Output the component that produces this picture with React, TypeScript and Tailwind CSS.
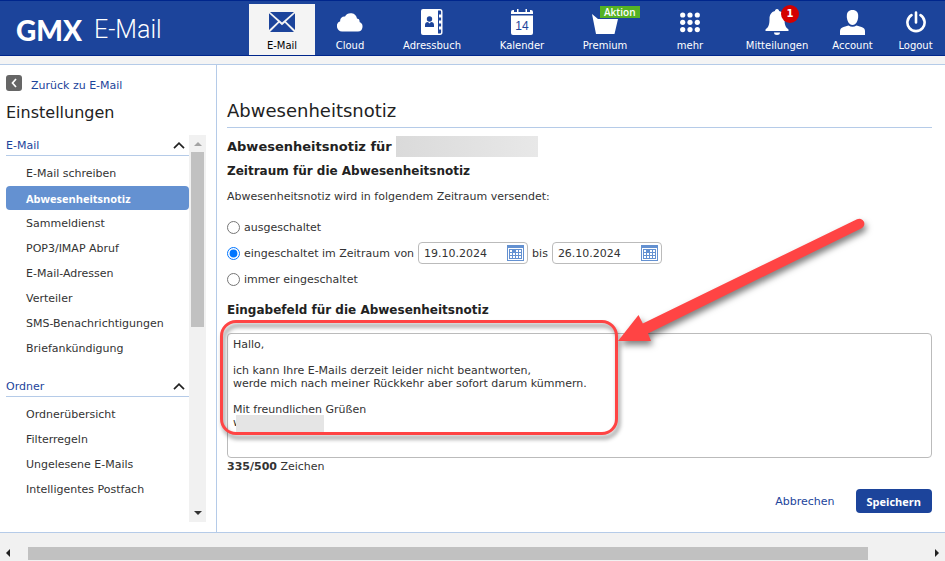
import React from 'react';

const mailLinks = [
    'E-Mail schreiben',
    'Abwesenheitsnotiz',
    'Sammeldienst',
    'POP3/IMAP Abruf',
    'E-Mail-Adressen',
    'Verteiler',
    'SMS-Benachrichtigungen',
    'Briefankündigung',
];

const folderLinks = ['Ordnerübersicht', 'Filterregeln', 'Ungelesene E-Mails', 'Intelligentes Postfach'];

const message = `Hallo,

ich kann Ihre E-Mails derzeit leider nicht beantworten,
werde mich nach meiner Rückkehr aber sofort darum kümmern.

Mit freundlichen Grüßen
w`;

const MailIcon = () => (
    <svg width="26" height="20" viewBox="0 0 26 20" fill="#1c449b">
        <path d="M1 0h24L13 10.500z" />
        <path d="M0 1.200 9 9.500 0 18zM26 1.200 17 9.500 26 18z" />
        <path d="M1 20 10.200 10.800 13 13.200l2.800-2.400L25 20z" />
    </svg>
);

const CloudIcon = () => (
    <svg width="26" height="19" viewBox="0 0 26 19" fill="white">
        <path d="M5.500 18.500A5.300 5.300 0 0 1 3.200 8.300 4.200 4.200 0 0 1 8 3.500 6.500 6.500 0 0 1 20 5.500a3 3 0 0 1 2.500 3.600A4.900 4.900 0 0 1 21 18.500z" />
    </svg>
);

const AddressIcon = () => (
    <svg width="22" height="26" viewBox="0 0 22 26" fill="white">
        <path d="M2 0h15v26H2a2 2 0 0 1-2-2V2a2 2 0 0 1 2-2z" />
        <path d="M17 .7h2q1.800 0 1.800 2v3.500H18M18 7.700h2.800v4.600H18M18 13.700h2.800v4.600H18M18 19.700h2.800v3.600q0 2-1.800 2h-2" fill="none" stroke="white" strokeWidth="1.400" />
        <circle cx="8.500" cy="10" r="2.700" fill="#1c449b" />
        <path d="M4 18v-2q0-3 3-3l1.500 1.500L10 13q3 0 3 3v2z" fill="#1c449b" />
    </svg>
);

const CalendarIcon = () => (
    <svg width="22" height="26" viewBox="0 0 22 26" fill="white">
        <path d="M0 5V3q0-2 2-2h1v2h3V0h1.500v3h7V0H16v3h3V1h1q2 0 2 2v2z" />
        <path d="M0 6.500h22V24a2 2 0 0 1-2 2H2a2 2 0 0 1-2-2z" />
        <text x="11" y="21" fontSize="12" textAnchor="middle" fill="#1c449b" fontFamily="Liberation Sans, sans-serif">14</text>
    </svg>
);

const BasketIcon = () => (
    <svg width="26" height="20" viewBox="0 0 26 20" fill="white">
        <path d="M0 0 6 5h20l-3.500 15H4z" />
    </svg>
);

const GridIcon = () => (
    <svg width="20" height="21" viewBox="0 0 20 21" fill="white">
        {[3, 10.3, 17.6].map(y => [2.7, 10, 17.3].map(x => <circle key={`${x}-${y}`} cx={x} cy={y} r="2.600" />))}
    </svg>
);

const BellIcon = () => (
    <svg width="24" height="26" viewBox="0 0 24 26" fill="white">
        <path d="M12 0c1.500 0 2 1 2 2 4 1 5.500 4 5.500 8 0 6 1 8 4 10.500v1.500H.5v-1.500c3-2.500 4-4.500 4-10.500 0-4 1.500-7 5.500-8 0-1 .5-2 2-2zM9 23.500h6q0 2.500-3 2.500t-3-2.500z" />
    </svg>
);

const PersonIcon = () => (
    <svg width="25" height="25" viewBox="0 0 25 25" fill="white">
        <path d="M12.500 0c4 0 5.700 2.500 5.700 6 0 4.500-2 9-5.700 9S6.800 10.500 6.800 6c0-3.500 1.700-6 5.700-6z" />
        <path d="M0 25v-4q0-3 3.500-4l5-1.500q4 2.500 8 0l5 1.500q3.500 1 3.500 4v4z" />
    </svg>
);

const PowerIcon = () => (
    <svg width="20" height="22" viewBox="0 0 20 22" fill="none" stroke="white" strokeWidth="2.600" strokeLinecap="round">
        <path d="M5.500 4.200a8.600 8.600 0 1 0 9 0M10 1.500v10" />
    </svg>
);

interface NavItemProps {
    label: string;
    icon: React.ReactNode;
    className: string;
    active?: boolean;
}

const NavItem: React.FC<NavItemProps> = ({ label, icon, className, active }) => (
    <a
        href="#"
        className={`flex flex-col items-center text-[10px] leading-3 ${className} ${active ? 'bg-[#f4f4f4] text-black' : 'text-white'}`}
    >
        <span className="flex h-9 items-center">{icon}</span>
        {label}
    </a>
);

const SidebarSection: React.FC<{ title: string; links: string[]; activeLink?: string }> = ({ title, links, activeLink }) => (
    <section className="mb-[17px]">
        <button className="flex h-5 w-full items-center justify-between border-b border-[#b5cbe8] pr-1 text-[#1c449b]">
            {title}
            <svg width="12" height="7" viewBox="0 0 12 7" fill="none" stroke="#222" strokeWidth="1.700">
                <path d="M1 6.200 6 1.200l5 5" />
            </svg>
        </button>
        <ul className="pt-1">
            {links.map(link => (
                <li key={link} className="h-[25px] pt-px">
                    <a
                        href="#"
                        className={`flex h-6 items-center rounded pl-5 ${link === activeLink ? "bg-[#6491d1] font-['Open_Sans',sans-serif] font-bold text-white" : 'text-[#333]'}`}
                    >
                        {link}
                    </a>
                </li>
            ))}
        </ul>
    </section>
);

const DateField: React.FC<{ id: string; label: string; value: string }> = ({ id, label, value }) => (
    <>
        <label htmlFor={id} className="px-1">{label}</label>
        <span className="flex h-[22px] w-[110px] items-center rounded border border-[#bbb] bg-white pr-[3px]">
            <input id={id} defaultValue={value} className="w-full min-w-0 pl-[5px] outline-none" />
            <button type="button" aria-label="Kalender öffnen">
                <svg width="17" height="16" viewBox="0 0 17 16" shapeRendering="crispEdges">
                    <rect width="17" height="16" rx="1" fill="#6491d1" />
                    <path d="M1 3h15v12H1z" fill="white" />
                    <path d="M2 4h13v10H2z" fill="#6491d1" />
                    <path d="M3 5h2v2H3zM9 5h2v2H9zM12 5h2v2h-2zM3 8h2v2H3zM6 8h2v2H6zM9 8h2v2H9zM12 8h2v2h-2zM3 11h2v2H3zM6 11h2v2H6zM9 11h2v2H9zM12 11h2v2h-2z" fill="white" />
                </svg>
            </button>
        </span>
    </>
);

const App: React.FC = () => (
    <div className="flex min-h-screen flex-col bg-white font-['DejaVu_Sans',sans-serif] text-[11px] leading-[13px] text-[#333]">
        <header className="flex h-14 justify-between border-y border-[#00268c] bg-[#1c449b]">
            <a href="#" className="flex items-center gap-3 pl-4 pt-1 text-white">
                <span className="font-['Lato',sans-serif] text-[28px] leading-8 font-black">GMX</span>
                <span className="font-['Roboto',sans-serif] text-[25px] leading-8 font-light">E-Mail</span>
            </a>
            <nav className="flex pt-[3px]">
                <NavItem label="E-Mail" icon={<MailIcon />} className="w-[66px]" active />
                <NavItem label="Cloud" icon={<CloudIcon />} className="w-[70px]" />
                <NavItem label="Adressbuch" icon={<AddressIcon />} className="w-[94px]" />
                <NavItem label="Kalender" icon={<CalendarIcon />} className="w-[86px]" />
                <NavItem
                    label="Premium"
                    icon={
                        <span className="relative pt-1">
                            <BasketIcon />
                            <span className="absolute -top-1 left-2 bg-[#54b224] px-1 font-['Open_Sans',sans-serif] text-[10px] leading-3 font-semibold">Aktion</span>
                        </span>
                    }
                    className="w-[80px]"
                />
                <NavItem label="mehr" icon={<GridIcon />} className="w-[90px]" />
                <NavItem
                    label="Mitteilungen"
                    icon={
                        <span className="relative">
                            <BellIcon />
                            <span className="absolute -top-1 left-4 flex size-[18px] items-center justify-center rounded-full bg-[#d40000] text-[10px] font-bold">1</span>
                        </span>
                    }
                    className="w-[84px]"
                />
                <NavItem label="Account" icon={<PersonIcon />} className="w-[67px]" />
                <NavItem label="Logout" icon={<PowerIcon />} className="w-[59px]" />
            </nav>
        </header>

        <div className="mt-2 flex flex-1 border-y border-[#b5cbe8] bg-white shadow-[0_-8px_0_#f4f4f4]">
            <aside className="w-[217px] shrink-0 border-r border-[#b5cbe8] pl-1.5 pt-2.5">
                <a href="#" className="flex items-center gap-[9px] text-[#1c449b]">
                    <span className="mb-1 flex size-4 items-center justify-center rounded-[3px] bg-[#666]">
                        <svg width="6" height="10" viewBox="0 0 6 10" fill="none" stroke="white" strokeWidth="1.700">
                            <path d="M5 1 1.500 5 5 9" />
                        </svg>
                    </span>
                    Zurück zu E-Mail
                </a>
                <h2 className="pt-1.5 text-base leading-6 text-[#222]">Einstellungen</h2>
                <div className="mt-2.5 flex h-[387px] pr-2.5">
                    <div className="flex-1 pt-px">
                        <SidebarSection title="E-Mail" links={mailLinks} activeLink="Abwesenheitsnotiz" />
                        <SidebarSection title="Ordner" links={folderLinks} />
                    </div>
                    <div className="flex w-[17px] flex-col items-center justify-between bg-[#f1f1f1] py-1.5">
                        <svg width="8" height="5" viewBox="0 0 8 5" fill="#a3a3a3"><path d="M0 5 4 1l4 4z" /></svg>
                        <div className="mt-1.5 mb-auto h-[175px] w-[13px] bg-[#c1c1c1]" />
                        <svg width="8" height="5" viewBox="0 0 8 5" fill="#333"><path d="M0 0h8L4 4z" /></svg>
                    </div>
                </div>
            </aside>

            <main className="min-w-0 flex-1 pr-[13px] pl-2.5">
                <h1 className="border-b border-[#b5cbe8] pt-[34px] pb-1 text-lg leading-6 text-[#222]">Abwesenheitsnotiz</h1>
                <h3 className="flex items-center gap-1 pt-2 text-[13px] leading-5 font-bold text-[#222]">
                    Abwesenheitsnotiz für
                    <span className="h-[21px] w-[142px] bg-linear-to-r from-[#dadada] to-[#e8e8e8]" />
                </h3>
                <h4 className="pt-1 text-xs leading-5 font-bold text-[#222]">Zeitraum für die Abwesenheitsnotiz</h4>
                <p className="pt-[9px]">Abwesenheitsnotiz wird in folgendem Zeitraum versendet:</p>

                <div className="pt-[11px]">
                    <label className="flex h-[26px] items-center gap-1">
                        <input type="radio" name="mode" className="size-[13px]" />
                        ausgeschaltet
                    </label>
                    <div className="flex h-[26px] items-center">
                        <label className="flex items-center gap-1">
                            <input type="radio" name="mode" defaultChecked className="size-[13px]" />
                            eingeschaltet im Zeitraum
                        </label>
                        <DateField id="from" label="von" value="19.10.2024" />
                        <DateField id="to" label="bis" value="26.10.2024" />
                    </div>
                    <label className="flex h-[26px] items-center gap-1">
                        <input type="radio" name="mode" className="size-[13px]" />
                        immer eingeschaltet
                    </label>
                </div>

                <h4 className="pt-2 text-xs leading-5 font-bold text-[#222]">
                    <label htmlFor="note">Eingabefeld für die Abwesenheitsnotiz</label>
                </h4>
                <div className="relative mt-[13px]">
                    <textarea
                        id="note"
                        defaultValue={message}
                        className="block h-[125px] w-full resize-none overflow-hidden rounded border border-[#bbb] px-[5px] py-1 outline-none"
                    />
                    <div className="absolute top-[82px] left-[9px] h-[17px] w-[88px] bg-[#e5e5e5]" />
                    {/* highlight frame and arrow */}
                    <div className="pointer-events-none absolute -top-[13px] -left-[7px] h-[115px] w-[398px] rounded-2xl border-3 border-[#f44] drop-shadow-[2px_4px_2px_rgba(0,0,0,0.45)]" />
                    <svg
                        width="250"
                        height="130"
                        viewBox="0 0 250 130"
                        className="pointer-events-none absolute -top-[116px] left-[391px] drop-shadow-[2px_4px_3px_rgba(0,0,0,0.5)]"
                    >
                        <path d="M0 124 20.500 98l4.300 8.500L239 2.200a5 5 0 0 1 4.600 9L30 116.500l3 7.500z" fill="#f44" />
                    </svg>
                </div>
                <p className="pt-0.5"><b>335/500</b> Zeichen</p>

                <div className="flex items-center justify-end gap-[21px] pt-4">
                    <button type="button" className="text-[#1c449b]">Abbrechen</button>
                    <button type="button" className="h-6 rounded bg-[#1c449b] px-[11px] font-['Open_Sans',sans-serif] font-bold text-white">Speichern</button>
                </div>
            </main>
        </div>

        <footer className="flex h-7 items-center bg-[#f1f1f1] px-1.5 pt-3">
            <svg width="4" height="8" viewBox="0 0 4 8" fill="#222"><path d="M4 0v8L0 4z" /></svg>
            <div className="mx-[18px] flex-1">
                <div className="h-[13px] w-[94.5%] bg-[#c1c1c1]" />
            </div>
            <svg width="4" height="8" viewBox="0 0 4 8" fill="#222"><path d="M0 0v8l4-4z" /></svg>
        </footer>
    </div>
);

export default App;
